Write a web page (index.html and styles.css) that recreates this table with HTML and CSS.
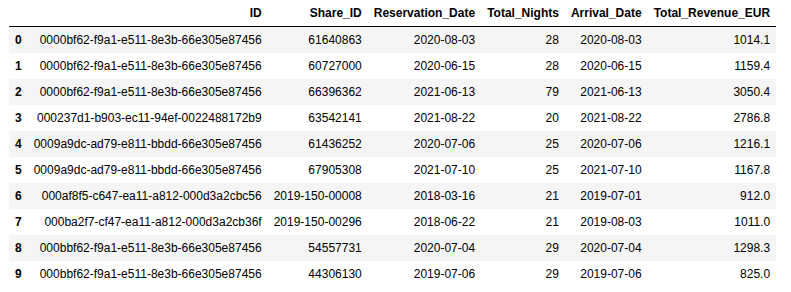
FILE: index.html
```html
<!DOCTYPE html>
<html>
<head>
<meta charset="utf-8">
<link rel="stylesheet" href="styles.css">
</head>
<body>
<table class="dataframe">
  <thead>
    <tr>
      <th></th>
      <th>ID</th>
      <th>Share_ID</th>
      <th>Reservation_Date</th>
      <th>Total_Nights</th>
      <th>Arrival_Date</th>
      <th>Total_Revenue_EUR</th>
    </tr>
  </thead>
  <tbody>
    <tr><th>0</th><td>0000bf62-f9a1-e511-8e3b-66e305e87456</td><td>61640863</td><td>2020-08-03</td><td>28</td><td>2020-08-03</td><td>1014.1</td></tr>
    <tr><th>1</th><td>0000bf62-f9a1-e511-8e3b-66e305e87456</td><td>60727000</td><td>2020-06-15</td><td>28</td><td>2020-06-15</td><td>1159.4</td></tr>
    <tr><th>2</th><td>0000bf62-f9a1-e511-8e3b-66e305e87456</td><td>66396362</td><td>2021-06-13</td><td>79</td><td>2021-06-13</td><td>3050.4</td></tr>
    <tr><th>3</th><td>000237d1-b903-ec11-94ef-0022488172b9</td><td>63542141</td><td>2021-08-22</td><td>20</td><td>2021-08-22</td><td>2786.8</td></tr>
    <tr><th>4</th><td>0009a9dc-ad79-e811-bbdd-66e305e87456</td><td>61436252</td><td>2020-07-06</td><td>25</td><td>2020-07-06</td><td>1216.1</td></tr>
    <tr><th>5</th><td>0009a9dc-ad79-e811-bbdd-66e305e87456</td><td>67905308</td><td>2021-07-10</td><td>25</td><td>2021-07-10</td><td>1167.8</td></tr>
    <tr><th>6</th><td>000af8f5-c647-ea11-a812-000d3a2cbc56</td><td>2019-150-00008</td><td>2018-03-16</td><td>21</td><td>2019-07-01</td><td>912.0</td></tr>
    <tr><th>7</th><td>000ba2f7-cf47-ea11-a812-000d3a2cb36f</td><td>2019-150-00296</td><td>2018-06-22</td><td>21</td><td>2019-08-03</td><td>1011.0</td></tr>
    <tr><th>8</th><td>000bbf62-f9a1-e511-8e3b-66e305e87456</td><td>54557731</td><td>2020-07-04</td><td>29</td><td>2020-07-04</td><td>1298.3</td></tr>
    <tr><th>9</th><td>000bbf62-f9a1-e511-8e3b-66e305e87456</td><td>44306130</td><td>2019-07-06</td><td>29</td><td>2019-07-06</td><td>825.0</td></tr>
  </tbody>
</table>
</body>
</html>
```

FILE: styles.css
```css
html, body {
  margin: 0;
  background: #fff;
}
body {
  padding: 0 9px;
  font-family: "Liberation Sans", Arial, sans-serif;
}
.dataframe {
  border-collapse: collapse;
  border-spacing: 0;
  color: #000;
  font-size: 12px;
}
.dataframe th,
.dataframe td {
  text-align: right;
  vertical-align: middle;
  padding: 6px;
  line-height: 14px;
  white-space: nowrap;
  border: none;
}
.dataframe th {
  font-weight: bold;
}
.dataframe thead {
  border-bottom: 1px solid #000;
}
.dataframe tbody tr:nth-child(odd) {
  background: #f5f5f5;
}
```
